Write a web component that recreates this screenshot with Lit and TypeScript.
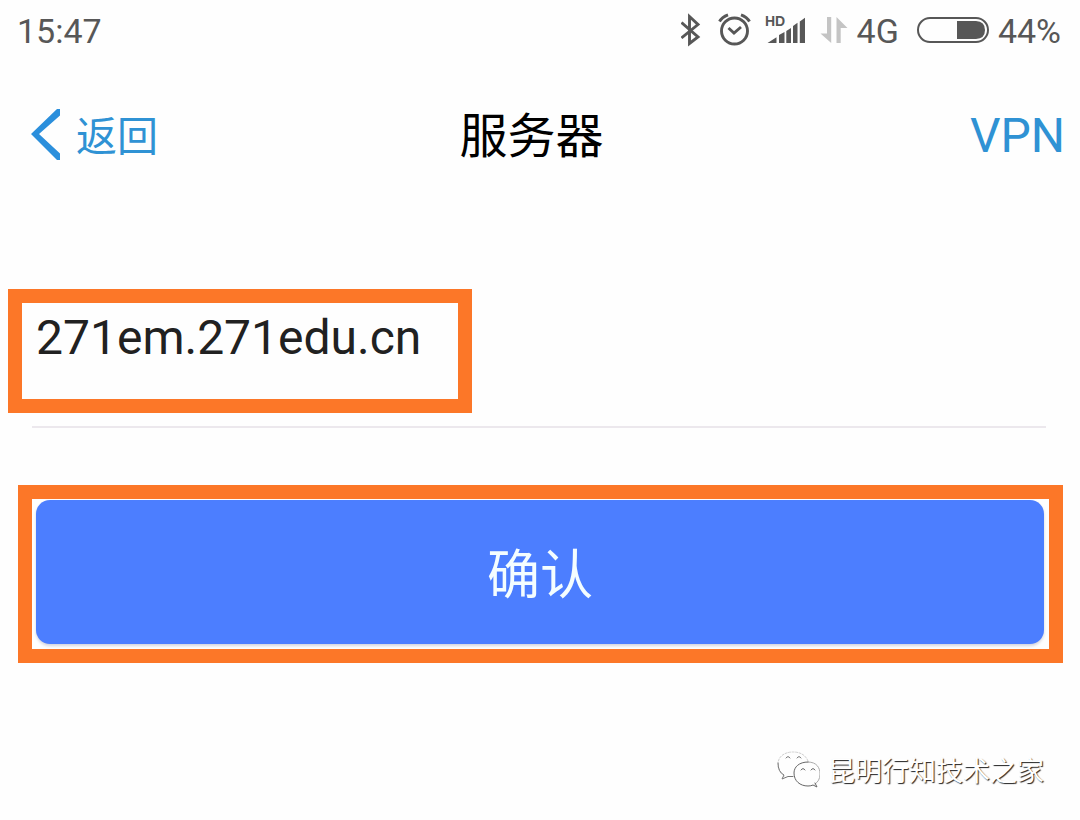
import { LitElement, html, css } from "lit";
import { customElement, state } from "lit/decorators.js";

@customElement("status-bar")
class StatusBar extends LitElement {
  static styles = css`
    :host {
      display: block;
      color: #575757;
      font-family: Roboto, "Noto Sans CJK SC", sans-serif;
      font-size: 34px;
      line-height: 40px;
    }
    .bar {
      display: flex;
      align-items: center;
      justify-content: space-between;
      padding: 11px 19px 9px 17px;
    }
    .icons {
      display: flex;
      align-items: center;
    }
    .icons svg {
      display: block;
      height: 40px;
    }
    .hd {
      font: 700 14px/16px "Liberation Sans", sans-serif;
    }
  `;

  render() {
    return html`
      <div class="bar">
        <span>15:47</span>
        <div class="icons">
          <svg width="176" height="40" viewBox="681 11 176 40" aria-hidden="true">
            <path d="M681.500 22.500 698 37 689.500 43.500V16.500L698 24.500 681.500 38" fill="none" stroke="#575757" stroke-width="2.900" stroke-linejoin="miter" />
            <g fill="none" stroke="#575757" stroke-width="2.900">
              <circle cx="734.500" cy="31" r="13" />
              <path d="M728.500 28 734 33 741 27" />
              <path d="M719.500 21.500Q722 17 728 14.800M741 14.800Q747 17 749.500 21.500" />
            </g>
            <text class="hd" x="765" y="25.500" fill="#575757">HD</text>
            <path d="M767.500 43 776.500 37.200V43ZM779 35 784.500 32V43H779ZM786.300 31 791 28V43H786.300ZM793 26 797.500 22.700V43H793ZM799.800 21.500 805 17.800V43H799.800Z" fill="#575757" />
            <path d="M827 17H831.200V43L820.500 33.500H827ZM836.500 17 847.500 28H840.700V43H836.500Z" fill="#c4c4c4" />
          </svg>
          <span>4G</span>
          <svg width="99" height="40" viewBox="899 11 99 40" aria-hidden="true">
            <rect x="918" y="18" width="70" height="24" rx="12" fill="none" stroke="#575757" stroke-width="2" />
            <path d="M957 21H976Q985 21.500 985 30T976 39H957Z" fill="#575757" />
          </svg>
          <span>44%</span>
        </div>
      </div>
    `;
  }
}

@customElement("page-header")
class PageHeader extends LitElement {
  static styles = css`
    :host {
      display: block;
      font-family: Roboto, "Noto Sans CJK SC", sans-serif;
    }
    .nav {
      display: grid;
      grid-template-columns: 1fr auto 1fr;
      align-items: center;
      padding: 0 15px 0 30px;
      height: 72px;
    }
    .link {
      display: flex;
      align-items: center;
      color: #2f92d4;
      text-decoration: none;
    }
    .back {
      gap: 14px;
      font-size: 41px;
      line-height: 48px;
    }
    .label {
      padding-top: 4px;
    }
    .vpn {
      justify-self: end;
      padding-top: 2px;
      font-size: 48px;
      line-height: 56px;
    }
    .title {
      margin: 0;
      padding: 4px 32px 0 0;
      color: #000;
      font-size: 48px;
      line-height: 56px;
      font-weight: 400;
    }
  `;

  render() {
    return html`
      <nav class="nav">
        <a class="link back" href="#back">
          <svg width="32" height="52" viewBox="0 0 32 52" aria-hidden="true">
            <path d="M30 0V6.500L9 25 30 44.500V51H27L1 25 27 0Z" fill="#2b8fdc" />
          </svg>
          <span class="label">返回</span>
        </a>
        <h1 class="title">服务器</h1>
        <a class="link vpn" href="#vpn">VPN</a>
      </nav>
    `;
  }
}

@customElement("app-root")
class AppRoot extends LitElement {
  static styles = css`
    :host {
      display: block;
      min-height: 100vh;
      background: #fefefe;
      font-family: Roboto, "Noto Sans CJK SC", sans-serif;
    }
    .page {
      display: flex;
      flex-direction: column;
      min-height: 100vh;
    }
    .header {
      margin-top: 39px;
    }
    .form {
      display: flex;
      flex-direction: column;
      margin-top: 118px;
    }
    .field {
      box-sizing: border-box;
      width: 43%;
      min-width: 464px;
      margin-left: 8px;
      padding: 7px 14px 33px;
      border: 14px solid #fc7728;
    }
    .input {
      display: block;
      width: 100%;
      box-sizing: border-box;
      padding: 0;
      border: 0;
      outline: 0;
      background: transparent;
      color: #212121;
      font: 400 48px/56px Roboto, sans-serif;
    }
    .rule {
      width: auto;
      height: 2px;
      margin: 13px 34px 0 32px;
      border: 0;
      background: #ece8ed;
    }
    .action {
      margin: 57px 17px 0 18px;
      padding: 1px 5px 5px 4px;
      border: 14px solid #fc7728;
    }
    .confirm {
      display: block;
      width: 100%;
      padding: 44px 0 36px;
      border: 0;
      border-radius: 14px;
      background: #4c7eff;
      box-shadow: 0 2px 3px #d5d5dd;
      color: #f4fdff;
      font: 400 53px/64px Roboto, "Noto Sans CJK SC", sans-serif;
    }
    .credit {
      display: flex;
      align-items: center;
      justify-content: flex-end;
      gap: 8px;
      margin: 87px 36px 0 0;
      color: #fff;
      font-family: "Noto Sans CJK SC", sans-serif;
      font-size: 27px;
      line-height: 40px;
      text-shadow: 1px 1px 1px #222;
    }
  `;

  @state() private server = "271em.271edu.cn";

  private onInput(e: Event) {
    this.server = (e.target as HTMLInputElement).value;
  }

  render() {
    return html`
      <main class="page">
        <status-bar></status-bar>
        <page-header class="header"></page-header>
        <form class="form" @submit=${(e: Event) => e.preventDefault()}>
          <div class="field">
            <input class="input" type="text" aria-label="服务器" .value=${this.server} @input=${this.onInput} />
          </div>
          <hr class="rule" />
          <div class="action">
            <button class="confirm" type="submit">确认</button>
          </div>
        </form>
        <footer class="credit">
          <svg width="43" height="40" viewBox="0 1 43 40" fill="none" stroke-linecap="round" aria-hidden="true">
            <path d="M31 12C28 5 22 3 16 3C7 3 1 8 1 15C1 20 3 24 7 27" stroke="#cfcfcf" stroke-width="1" stroke-dasharray="2 1.500" />
            <path d="M1 14Q1 23 7 26L5 30L11 27.500H16M9 9Q11 6 13 9M20 9Q22 6 24 9" stroke="#777" stroke-width="1" />
            <path d="M31 13C40 13 43 19 43 25C43 30 41 33 38 35" stroke="#aaa" stroke-width="1" />
            <path d="M31 13C22 13 17 18 17 24C17 32 23 37 31 37Q34 37 36 36L40 38L38 34M24 21Q26 18 28 21M34 21Q36 18 38 21" stroke="#666" stroke-width="1" />
          </svg>
          <span>昆明行知技术之家</span>
        </footer>
      </main>
    `;
  }
}
